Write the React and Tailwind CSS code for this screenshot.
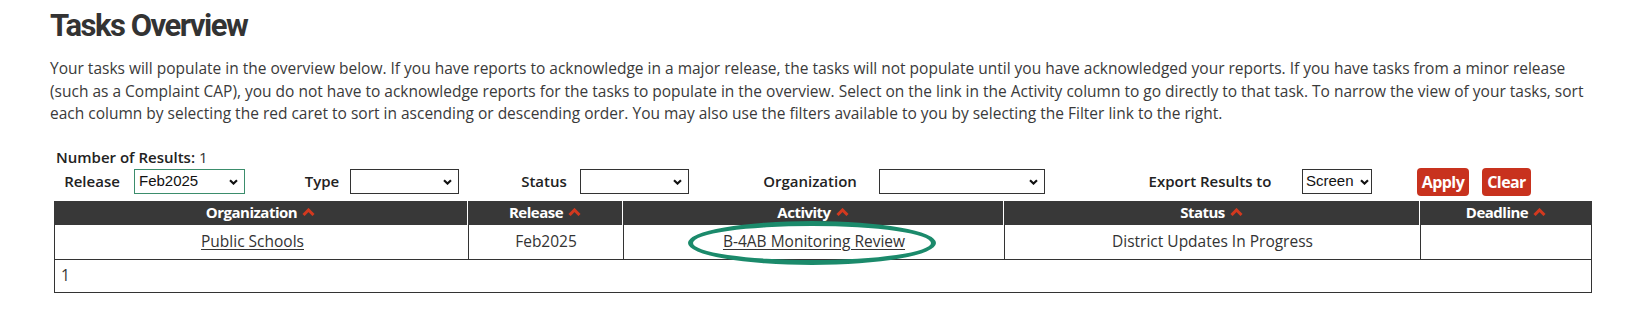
import React from "react";

const Caret = () => (
  <svg width="13" height="8" viewBox="0 0 13 8" className="inline-block ml-[5px] mb-[1px]">
    <path d="M1.5 7L6.5 2L11.5 7" fill="none" stroke="#d2391f" strokeWidth="3" />
  </svg>
);

const Chevron = ({ right = "right-[7px]" }) => (
  <svg width="9" height="6" viewBox="0 0 9 6" className={`pointer-events-none absolute top-1/2 -translate-y-1/2 ${right}`}>
    <path d="M1 1.2L4.5 4.6L8 1.2" fill="none" stroke="#111" strokeWidth="2.1" />
  </svg>
);

function Select({ value = "", width, green, pad = "pl-[4px]", right }) {
  return (
    <div className={`relative h-[25px] ${width}`}>
      <select
        defaultValue={value}
        className={`h-full w-full appearance-none bg-white ${pad} text-[15px] font-normal text-[#111] outline-none border ${
          green ? "border-[#3b8d6c]" : "border-[#333]"
        }`}
        style={{ fontFamily: '"Liberation Sans", Arial, sans-serif' }}
      >
        <option value={value}>{value}</option>
      </select>
      <Chevron right={right} />
    </div>
  );
}

export default function App() {
  const columns = [
    { name: "Organization", w: "w-[414px]" },
    { name: "Release", w: "w-[155px]" },
    { name: "Activity", w: "w-[381px]" },
    { name: "Status", w: "w-[416px]" },
    { name: "Deadline", w: "flex-1" },
  ];

  return (
    <div
      className="h-[310px] w-[1641px] bg-white text-[#333] pl-[50px] pt-[7px]"
      style={{ fontFamily: '"Open Sans", "Noto Sans", sans-serif' }}
    >
      {/* Heading */}
      <h1
        className="text-[31px] leading-[38px] font-bold tracking-[-1.5px] text-[#333]"
        style={{ fontFamily: "Roboto, sans-serif" }}
      >
        Tasks Overview
      </h1>

      {/* Intro */}
      <p className="mt-[12px] w-[1540px] text-[15.5px] leading-[22.5px] text-[#3a3a3a]">
        Your tasks will populate in the overview below. If you have reports to acknowledge in a major release, the tasks will
        not populate until you have acknowledged your reports. If you have tasks from a minor release (such as a Complaint
        CAP), you do not have to acknowledge reports for the tasks to populate in the overview. Select on the link in the
        Activity column to go directly to that task. To narrow the view of your tasks, sort each column by selecting the red
        caret to sort in ascending or descending order. You may also use the filters available to you by selecting the Filter
        link to the right.
      </p>

      <div className="ml-[4px] mt-[22px] w-[1538px]">
        {/* Result count */}
        <div className="pl-[2px] text-[15px] leading-[20px]">
          <span className="font-semibold text-[#222]">Number of Results:</span> <span>1</span>
        </div>

        {/* Filters */}
        <div className="flex items-center h-[28px] mt-[1px] text-[15px] font-semibold text-[#222]">
          <div className="w-[76px] text-center">Release</div>
          <div className="ml-[4px]">
            <Select value="Feb2025" width="w-[111px]" green />
          </div>
          <div className="ml-[49px] w-[56px] text-center">Type</div>
          <Select width="w-[109px]" />
          <div className="ml-[49px] w-[72px] text-center">Status</div>
          <Select width="w-[109px]" />
          <div className="ml-[52px] w-[138px] text-center">Organization</div>
          <Select width="w-[166px]" />
          <div className="ml-[73px] w-[184px] text-center">Export Results to</div>
          <Select value="Screen" width="w-[70px]" pad="pl-[3px]" right="right-[3px]" />
          <button className="ml-[45px] h-[28px] w-[52px] rounded-[4px] bg-[#c8321e] text-[16px] font-bold tracking-[-0.6px] text-white">
            Apply
          </button>
          <button className="ml-[13px] h-[28px] w-[49px] rounded-[4px] bg-[#c8321e] text-[16px] font-bold tracking-[-0.6px] text-white">
            Clear
          </button>
        </div>

        {/* Table */}
        <div className="mt-[5px]">
          <div className="flex h-[24px] bg-[#383838] text-white text-[15px] font-bold tracking-[-0.5px]">
            {columns.map((c, i) => (
              <div
                key={c.name}
                className={`${c.w} flex items-center justify-center ${i < columns.length - 1 ? "border-r border-white" : ""}`}
              >
                {c.name}
                <Caret />
              </div>
            ))}
          </div>

          <div className="flex h-[35px] border-x border-b border-[#333] text-[15.5px] text-[#333]">
            <div className="w-[414px] flex items-center justify-center pr-[18px] border-r border-[#333]">
              <a href="#" className="underline underline-offset-2">Public Schools</a>
            </div>
            <div className="w-[155px] flex items-center justify-center border-r border-[#333]">Feb2025</div>
            <div className="relative w-[381px] flex items-center justify-center border-r border-[#333]">
              <a href="#" className="underline underline-offset-2">B-4AB Monitoring Review</a>
              <div className="pointer-events-none absolute left-[64px] top-[-4px] h-[44px] w-[248px] rounded-[50%] border-[5px] border-[#1b8a6b]" />
            </div>
            <div className="w-[416px] flex items-center justify-center border-r border-[#333]">
              District Updates In Progress
            </div>
            <div className="flex-1" />
          </div>

          <div className="flex h-[33px] items-center border-x border-b border-[#333] pl-[6px] text-[15.5px]">1</div>
        </div>
      </div>
    </div>
  );
}
